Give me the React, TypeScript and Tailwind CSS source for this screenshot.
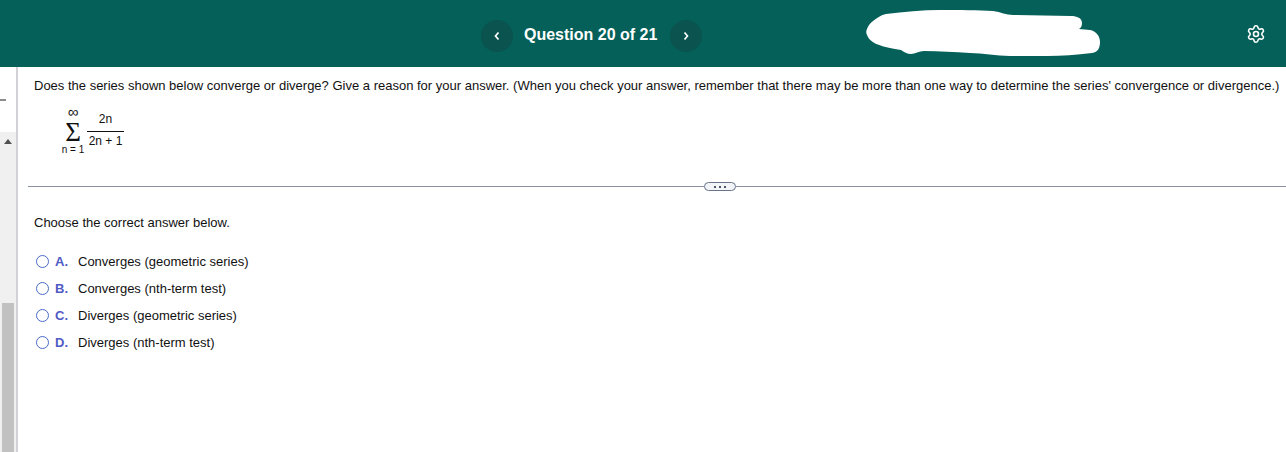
import { Settings } from "lucide-react";

const options = [
  ["A.", "Converges (geometric series)"],
  ["B.", "Converges (nth-term test)"],
  ["C.", "Diverges (geometric series)"],
  ["D.", "Diverges (nth-term test)"],
];

export default function App() {
  return (
    <div className="h-[452px] w-[1286px] overflow-hidden bg-white font-['Liberation_Sans',Arial,sans-serif] text-[#111111]">
      <header className="flex h-[67px] items-center bg-[#046058] pl-[481px] text-white">
        <button className="mt-[4px] flex h-8 w-8 items-center justify-center rounded-full bg-[#0a534e]">
          <svg width="8" height="10" viewBox="0 0 8 10" fill="none" stroke="white" strokeWidth="1.7">
            <path d="M5.5 1.5 2.5 5l3 3.5" />
          </svg>
        </button>
        <h1 className="ml-[11px] mt-[2px] w-[146px] text-base font-bold">Question 20 of 21</h1>
        <button className="mt-[4px] flex h-8 w-8 items-center justify-center rounded-full bg-[#0a534e]">
          <svg width="8" height="10" viewBox="0 0 8 10" fill="none" stroke="white" strokeWidth="1.7">
            <path d="M2.5 1.5 5.5 5l-3 3.5" />
          </svg>
        </button>
        <svg className="ml-[164px]" width="236" height="47" viewBox="0 0 236 47" fill="white">
          <path d="M20 4C38 2 56 0 74 0c20 0 38 0 53 1 8 1 13 4 20 4l58 1c6 0 11 2 11 7 0 3-1 5-3 6l11 1c6 1 10 6 10 12 0 6-2 10-8 11-16 2-30 3-45 3h-37c-14 0-27-3-40-3-16-1-30-2-46-2-5 0-9 3-13 3-4 0-7-2-10-4C10 36 4 32 1 25c-1-2-1-4 0-6 1-3 3-6 6-8 4-3 8-6 13-7Z" />
        </svg>
        <Settings className="ml-[144px] mt-[1px]" size={20} strokeWidth={1.9} />
      </header>
      <div className="flex h-[385px]">
        <aside className="flex w-[18px] shrink-0 flex-col border-r-2 border-[#d2d2d6]">
          <div className="h-[65px] pt-[32px]">
            <div className="h-[2px] w-[6px] bg-[#8c8c8c]" />
          </div>
          <div className="flex flex-1 flex-col bg-[#f0f0f0]">
            <div className="flex h-[171px] justify-center pt-[7px]">
              <div className="h-0 w-0 border-x-4 border-b-[5px] border-x-transparent border-b-[#505050]" />
            </div>
            <div className="mx-[2px] flex-1 bg-[#c1c1c1]" />
          </div>
        </aside>
        <main className="min-w-0 flex-1 pl-[16px]">
          <p className="whitespace-nowrap pt-[10px] text-[13px] leading-[17px]">
            Does the series shown below converge or diverge? Give a reason for your answer. (When you check your answer, remember that there may be more than one way to determine the series' convergence or divergence.)
          </p>
          <div className="flex items-start pl-[26px] pt-[13px] text-[12px] leading-none">
            <div className="flex w-[26px] flex-col items-center">
              <span className="h-[9px] text-[15px] leading-[9px]">∞</span>
              <span className="mt-[6px] h-[21px] font-['Liberation_Serif',serif] text-[27px] leading-[21px]">Σ</span>
              <span className="mt-[1px] text-[10px] leading-[12px]">n = 1</span>
            </div>
            <div className="ml-[1px] mt-[5px] flex w-[37px] flex-col items-center">
              <span className="pb-[5px] leading-[14px]">2n</span>
              <span className="w-full border-t border-[#111111] pt-[2px] text-center leading-[14px]">2n + 1</span>
            </div>
          </div>
          <div className="ml-[-6px] mt-[26px] flex items-center">
            <div className="h-px w-[676px] bg-[#8a91a3]" />
            <div className="flex h-[9px] w-[32px] items-center justify-center gap-[3px] rounded-full border border-[#67748a] bg-[#f3f4f7]">
              <span className="h-[2px] w-[2px] bg-[#4a5568]" />
              <span className="h-[2px] w-[2px] bg-[#4a5568]" />
              <span className="h-[2px] w-[2px] bg-[#4a5568]" />
            </div>
            <div className="h-px flex-1 bg-[#8a91a3]" />
          </div>
          <p className="pt-[23px] text-[13px] leading-[17px]">Choose the correct answer below.</p>
          <ul className="pt-[17px]">
            {options.map(([letter, text]) => (
              <li key={letter} className="flex h-[27px] items-center text-[13px]">
                <span className="ml-[2px] h-[13px] w-[13px] rounded-full border-[1.5px] border-[#4a6bc8]" />
                <span className="ml-[6px] w-[23px] font-bold text-[#4f5bc4]">{letter}</span>
                <span>{text}</span>
              </li>
            ))}
          </ul>
        </main>
      </div>
    </div>
  );
}
